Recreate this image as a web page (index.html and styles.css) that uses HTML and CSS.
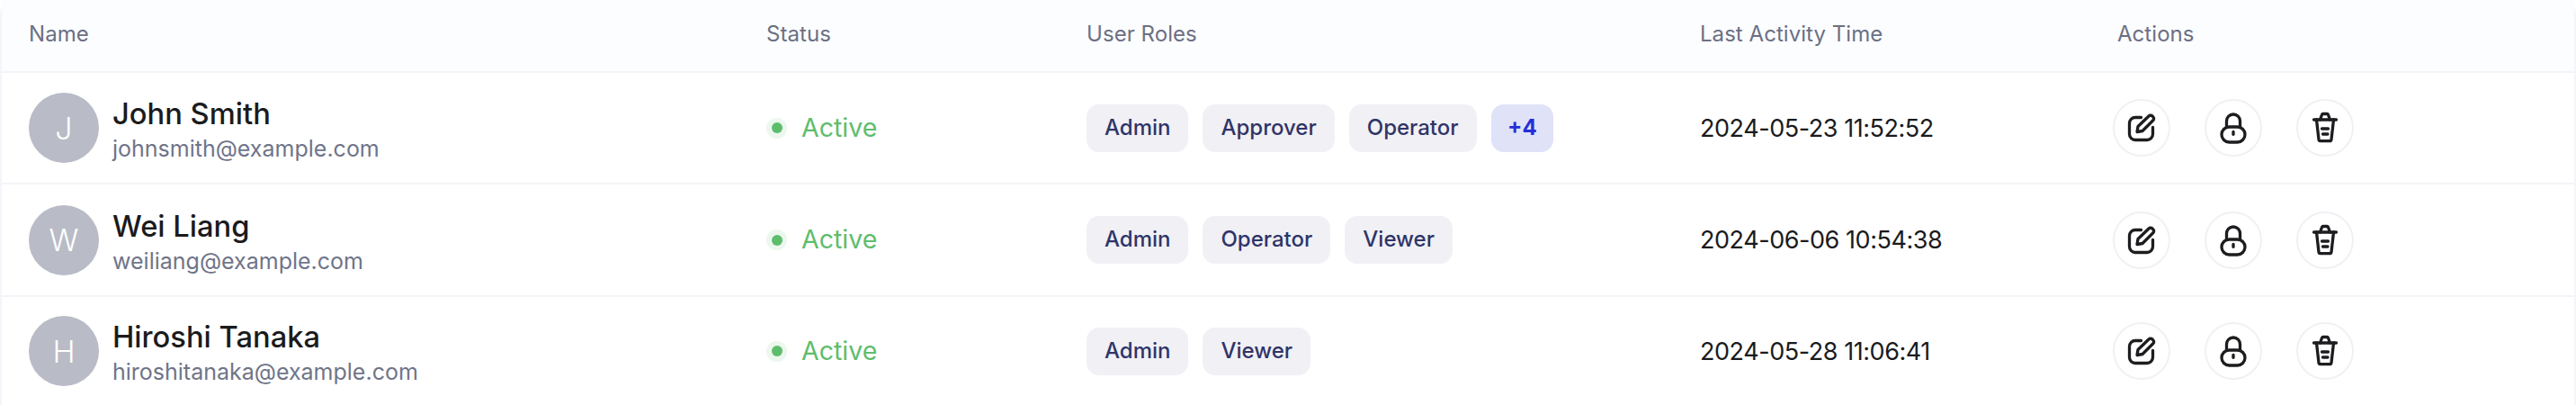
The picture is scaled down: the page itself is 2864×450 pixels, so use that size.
FILE: index.html
```html
<!DOCTYPE html>
<html lang="en">
<head>
<meta charset="utf-8">
<title>Users</title>
<link rel="stylesheet" href="styles.css">
</head>
<body>
<svg class="sprite" width="0" height="0" aria-hidden="true">
  <symbol id="i-edit" viewBox="0 0 36 36">
    <path d="M17.500 6.500H11a6.500 6.500 0 0 0-6.500 6.500v12a6.500 6.500 0 0 0 6.500 6.500h13a6.500 6.500 0 0 0 6.500-6.500v-7.500" />
    <path d="M13 22.500l1-6L26 5a2.800 2.800 0 0 1 4 0l.8.800a2.800 2.800 0 0 1 0 4L19 21.500z" />
  </symbol>
  <symbol id="i-lock" viewBox="0 0 36 36">
    <path d="M10.500 17V10.500a7.500 7.500 0 0 1 15 0V17" />
    <rect x="5" y="17" width="26" height="17" rx="8.500" />
    <path d="M18 22.500v2.800" />
  </symbol>
  <symbol id="i-trash" viewBox="0 0 36 36">
    <path d="M5.500 9h25" />
    <path d="M12.500 9l2-5.500a1.500 1.500 0 0 1 1.400-1h4.200a1.500 1.500 0 0 1 1.400 1l2 5.500" />
    <path d="M8.500 9L11 31a1.800 1.800 0 0 0 1.800 1.600h10.400A1.800 1.800 0 0 0 25 31l2.500-22" />
    <path d="M14.500 19h7M15.500 25h5.500" />
  </symbol>
</svg>
<main class="table">
  <div class="row head">
    <div class="cell">Name</div>
    <div class="cell">Status</div>
    <div class="cell">User Roles</div>
    <div class="cell">Last Activity Time</div>
    <div class="cell">Actions</div>
  </div>
  <div class="row body first">
    <div class="cell user">
      <div class="avatar">J</div>
      <div class="who"><div class="name">John Smith</div><div class="email">johnsmith@example.com</div></div>
    </div>
    <div class="cell status"><span class="dot"></span>Active</div>
    <div class="cell roles"><span class="chip">Admin</span><span class="chip">Approver</span><span class="chip">Operator</span><span class="chip more">+4</span></div>
    <div class="cell time">2024-05-23 11:52:52</div>
    <div class="cell actions">
      <button class="act"><svg class="ico"><use href="#i-edit"/></svg></button>
      <button class="act"><svg class="ico"><use href="#i-lock"/></svg></button>
      <button class="act"><svg class="ico"><use href="#i-trash"/></svg></button>
    </div>
  </div>
  <div class="row body second">
    <div class="cell user">
      <div class="avatar">W</div>
      <div class="who"><div class="name">Wei Liang</div><div class="email">weiliang@example.com</div></div>
    </div>
    <div class="cell status"><span class="dot"></span>Active</div>
    <div class="cell roles"><span class="chip">Admin</span><span class="chip">Operator</span><span class="chip">Viewer</span></div>
    <div class="cell time">2024-06-06 10:54:38</div>
    <div class="cell actions">
      <button class="act"><svg class="ico"><use href="#i-edit"/></svg></button>
      <button class="act"><svg class="ico"><use href="#i-lock"/></svg></button>
      <button class="act"><svg class="ico"><use href="#i-trash"/></svg></button>
    </div>
  </div>
  <div class="row body third">
    <div class="cell user">
      <div class="avatar">H</div>
      <div class="who"><div class="name">Hiroshi Tanaka</div><div class="email">hiroshitanaka@example.com</div></div>
    </div>
    <div class="cell status"><span class="dot"></span>Active</div>
    <div class="cell roles"><span class="chip">Admin</span><span class="chip">Viewer</span></div>
    <div class="cell time">2024-05-28 11:06:41</div>
    <div class="cell actions">
      <button class="act"><svg class="ico"><use href="#i-edit"/></svg></button>
      <button class="act"><svg class="ico"><use href="#i-lock"/></svg></button>
      <button class="act"><svg class="ico"><use href="#i-trash"/></svg></button>
    </div>
  </div>
</main>
</body>
</html>
```
FILE: styles.css
```css
* { box-sizing: border-box; }
html, body { margin: 0; background: #fff; }
body { width: 2864px; height: 450px; overflow: hidden; font-family: Inter, "Liberation Sans", sans-serif; }
.sprite { display: block; }
.table { border-left: 2px solid #f4f5fa; border-right: 2px solid #f4f5fa; border-radius: 16px 16px 0 0; }
.row { display: grid; grid-template-columns: 820px 356px 682px 464px 1fr; border-bottom: 2px solid #f3f4f8; align-items: center; }
.head { height: 81px; background: #fcfdff; color: #6b7084; font-size: 24px; letter-spacing: 0.05px; padding-bottom: 4px; }
.body { height: 124px; }
.second { height: 125px; }
.third { height: 120px; border-bottom: 0; }
.cell { padding-left: 30px; padding-right: 0; }
.user { display: flex; align-items: center; gap: 15px; }
.avatar { width: 78px; height: 78px; border-radius: 50%; background: #b9bbc6; color: #fff; font-size: 34px; font-weight: 300; display: flex; align-items: center; justify-content: center; }
.who { padding-top: 4px; }
.name { font-size: 32.700px; font-weight: 500; color: #1b1b1d; line-height: 42px; }
.email { font-size: 25px; color: #6f7489; line-height: 36px; }
.status { display: flex; align-items: center; gap: 16px; color: #5ebd6d; font-size: 28.500px; padding-bottom: 2px; }
.dot { width: 23px; height: 23px; margin-top: 2px; border-radius: 50%; background: #ecf7ee; display: flex; align-items: center; justify-content: center; }
.dot::after { content: ""; width: 12px; height: 12px; border-radius: 50%; background: #5ebd6d; }
.roles { display: flex; gap: 16px; }
.chip { height: 53px; padding: 0 20px 2px; border-radius: 14px; background: #f1f0f5; color: #2f3568; font-size: 24px; font-weight: 500; display: flex; align-items: center; }
.more { background: #e0e2f8; color: #2430d8; font-weight: 700; padding: 0 18.500px 2px; }
.time { font-size: 27px; letter-spacing: -0.450px; color: #1b1b1d; }
.actions { display: flex; gap: 38px; padding-left: 25px; }
.act { width: 64px; height: 64px; border-radius: 50%; border: 2px solid #f1f1f5; background: #fff; padding: 0; display: flex; align-items: center; justify-content: center; }
.ico { width: 36px; height: 36px; fill: none; stroke: #1d1d20; stroke-width: 3.300; stroke-linecap: round; stroke-linejoin: round; }
```
